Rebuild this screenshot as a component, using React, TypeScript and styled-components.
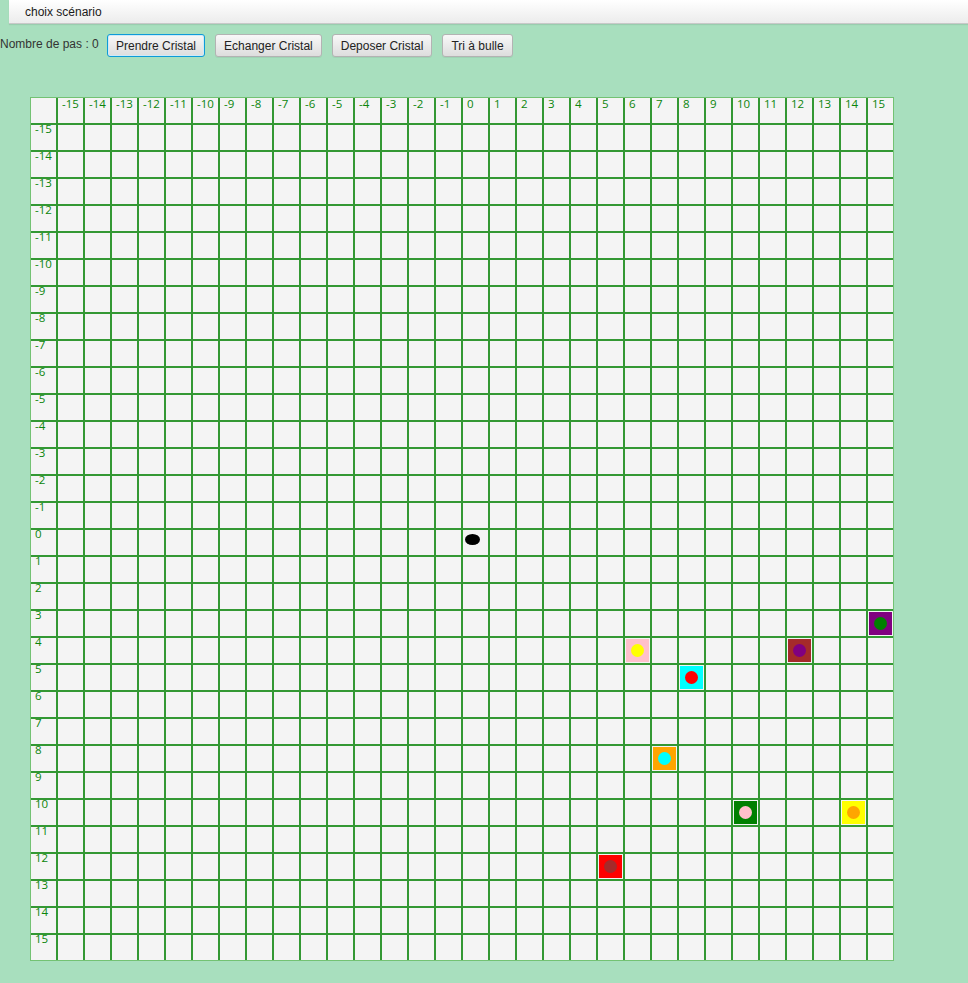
import React from "react";
import styled, { createGlobalStyle, css } from "styled-components";

const Global = createGlobalStyle`
  html, body { margin: 0; padding: 0; }
  body {
    background: #a8dfbe;
    font-family: "Liberation Sans", Arial, sans-serif;
    width: 968px;
    height: 983px;
    overflow: hidden;
  }
`;

const Page = styled.div`
  display: flex;
  flex-direction: column;
`;

const MenuBar = styled.div`
  margin-left: 9px;
  height: 24px;
  box-sizing: border-box;
  display: flex;
  align-items: center;
  padding-left: 16px;
  background: linear-gradient(#ffffff, #ececec);
  border-bottom: 1px solid #c8c8c8;
  box-shadow: 0 1px 1px rgba(0, 0, 0, 0.08);
  font-size: 12px;
  color: #1a1a1a;
`;

const Toolbar = styled.div`
  display: flex;
  align-items: center;
  margin-top: 10px;
  height: 23px;
`;

const Label = styled.span`
  font-size: 12px;
  color: #333;
  width: 107px;
  margin-top: -3px;
`;

const Button = styled.button<{ $focused?: boolean }>`
  height: 23px;
  box-sizing: border-box;
  margin-right: 10px;
  padding: 0 8px;
  font-family: "Liberation Sans", Arial, sans-serif;
  font-size: 12px;
  color: #222;
  border: 1px solid #b3b3b3;
  border-radius: 3px;
  background: linear-gradient(#f8f8f8, #dddddd);
  box-shadow: 0 1px 0 rgba(0, 0, 0, 0.05);
  ${(p) =>
    p.$focused &&
    css`
      border-color: #0e9bd8;
      box-shadow: inset 0 0 0 1px #cfeaf7;
    `}
`;

const Board = styled.div`
  margin: 40px 0 0 30px;
  width: 864px;
  box-sizing: border-box;
  display: grid;
  grid-template-columns: repeat(32, 25px);
  grid-auto-rows: 25px;
  gap: 2px;
  background: #339833;
  border: 1px solid #73c273;
`;

const Cell = styled.div`
  background: #f4f4f4;
  display: flex;
  position: relative;
`;

const CellLabel = styled.span<{ $row?: boolean }>`
  font-family: "Open Sans", "Noto Sans", sans-serif;
  font-size: 11.5px;
  line-height: 12px;
  color: #0b850b;
  padding-left: 4px;
  margin-top: ${(p) => (p.$row ? "-2px" : "0px")};
`;

const Crystal = styled.div<{ $bg: string }>`
  margin: 1px;
  width: 23px;
  height: 23px;
  background: ${(p) => p.$bg};
  display: flex;
  align-items: center;
  justify-content: center;
`;

const Dot = styled.div<{ $c: string }>`
  width: 13px;
  height: 13px;
  border-radius: 50%;
  background: ${(p) => p.$c};
`;

const Robot = styled.div`
  margin: 4px 0 0 2px;
  width: 15px;
  height: 11px;
  border-radius: 50%;
  background: #000;
`;

const crystals: Record<string, [string, string]> = {
  "3,15": ["#800080", "#008000"],
  "4,6": ["#ffc0cb", "#ffff00"],
  "4,12": ["#a52a2a", "#800080"],
  "5,8": ["#00ffff", "#ff0000"],
  "8,7": ["#ffa500", "#00ffff"],
  "10,10": ["#008000", "#ffc0cb"],
  "10,14": ["#ffff00", "#ffa500"],
  "12,5": ["#ff0000", "#a52a2a"],
};

const range: number[] = [];
for (let i = -15; i <= 15; i++) range.push(i);

export default function App() {
  const cells: React.ReactNode[] = [];
  cells.push(<Cell key="corner" />);
  range.forEach((c) =>
    cells.push(
      <Cell key={`h${c}`}>
        <CellLabel>{c}</CellLabel>
      </Cell>
    )
  );
  range.forEach((r) => {
    cells.push(
      <Cell key={`r${r}`}>
        <CellLabel $row>{r}</CellLabel>
      </Cell>
    );
    range.forEach((c) => {
      const k = `${r},${c}`;
      const cr = crystals[k];
      cells.push(
        <Cell key={k}>
          {cr && (
            <Crystal $bg={cr[0]}>
              <Dot $c={cr[1]} />
            </Crystal>
          )}
          {r === 0 && c === 0 && <Robot />}
        </Cell>
      );
    });
  });

  return (
    <Page>
      <Global />
      <MenuBar>choix scénario</MenuBar>
      <Toolbar>
        <Label>Nombre de pas : 0</Label>
        <Button $focused>Prendre Cristal</Button>
        <Button>Echanger Cristal</Button>
        <Button>Deposer Cristal</Button>
        <Button>Tri à bulle</Button>
      </Toolbar>
      <Board>{cells}</Board>
    </Page>
  );
}
